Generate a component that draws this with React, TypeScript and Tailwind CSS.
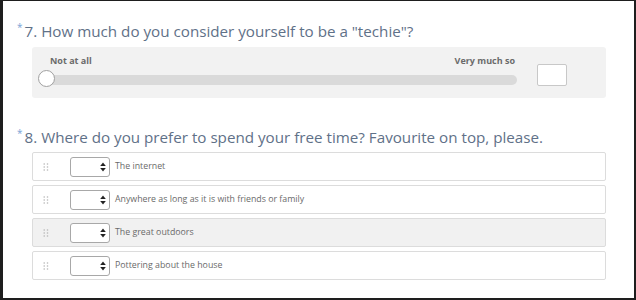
const options = [
  { label: "The internet", active: false },
  { label: "Anywhere as long as it is with friends or family", active: false },
  { label: "The great outdoors", active: true },
  { label: "Pottering about the house", active: false },
];

function QuestionTitle({ num, text }: { num: number; text: string }) {
  return (
    <div className="flex items-start h-[22px] leading-[22px] pl-[14px]">
      <span className="text-[10px] leading-[14px] text-[#7aa3d6] mr-[2px]">*</span>
      <span className="text-[15.2px] text-[#5f7188]">
        {num}. {text}
      </span>
    </div>
  );
}

function DragHandle() {
  return (
    <svg width="6" height="8" viewBox="0 0 6 8" className="shrink-0">
      {[1, 4, 7].map((y) =>
        [1.2, 4.5].map((x) => <circle key={`${x}-${y}`} cx={x} cy={y} r="0.8" fill="#b5b5b5" />)
      )}
    </svg>
  );
}

function RankSelect() {
  return (
    <div className="w-[40px] h-[20px] rounded-[3px] border border-[#a8a8a8] bg-white flex items-center justify-end pr-[3px]">
      <svg width="6" height="10" viewBox="0 0 6 10">
        <path d="M3 0.5 L5.8 4 L0.2 4 Z" fill="#222" />
        <path d="M3 9.5 L5.8 6 L0.2 6 Z" fill="#222" />
      </svg>
    </div>
  );
}

export default function App() {
  return (
    <div className="w-[636px] h-[300px] bg-white border-t border-l-[3px] border-r-2 border-b-2 border-[#1e1e1e] font-['Open_Sans',sans-serif] overflow-hidden">
      <div className="pt-[19px]">
        <QuestionTitle num={7} text={'How much do you consider yourself to be a "techie"?'} />

        {/* Slider panel */}
        <div className="ml-[29px] mt-[5px] w-[574px] h-[51px] bg-[#f2f2f2] rounded-[3px] flex items-start">
          <div className="w-[485px] pl-[6px] pt-[9px]">
            <div className="flex justify-between pl-[12px] pr-[2px] text-[9px] leading-[10px] font-bold text-[#6b6b6b]">
              <span>Not at all</span>
              <span>Very much so</span>
            </div>
            <div className="relative h-[18px] mt-[4px]">
              <div className="absolute left-[2px] right-0 top-[5px] h-[10px] rounded-full bg-[#dadada]" />
              <div className="absolute left-0 top-0 w-[17px] h-[17px] rounded-full bg-white border border-[#a0a0a0]" />
            </div>
          </div>
          <div className="ml-[20px] mt-[17px] w-[30px] h-[22px] bg-white border border-[#c8c8c8] rounded-[2px]" />
        </div>

        <div className="mt-[28px]">
          <QuestionTitle num={8} text="Where do you prefer to spend your free time? Favourite on top, please." />
        </div>

        {/* Ranking rows */}
        <div className="ml-[29px] mt-[4px] w-[574px] flex flex-col gap-[4px]">
          {options.map((o) => (
            <div
              key={o.label}
              className={`h-[29px] rounded-[2px] border border-[#dcdcdc] flex items-center pl-[10px] ${
                o.active ? "bg-[#f1f1f1]" : "bg-white"
              }`}
            >
              <DragHandle />
              <div className="ml-[21px]">
                <RankSelect />
              </div>
              <span className="ml-[5px] text-[8.8px] text-[#6a6a6a]">{o.label}</span>
            </div>
          ))}
        </div>
      </div>
    </div>
  );
}
